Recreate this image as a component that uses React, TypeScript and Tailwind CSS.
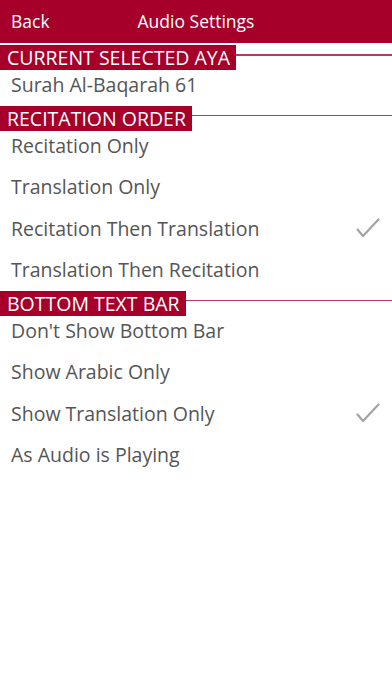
const SECTIONS = [
  { title: "CURRENT SELECTED AYA", items: [{ label: "Surah Al-Baqarah 61", checked: false }] },
  {
    title: "RECITATION ORDER",
    items: [
      { label: "Recitation Only", checked: false },
      { label: "Translation Only", checked: false },
      { label: "Recitation Then Translation", checked: true },
      { label: "Translation Then Recitation", checked: false },
    ],
  },
  {
    title: "BOTTOM TEXT BAR",
    items: [
      { label: "Don't Show Bottom Bar", checked: false },
      { label: "Show Arabic Only", checked: false },
      { label: "Show Translation Only", checked: true },
      { label: "As Audio is Playing", checked: false },
    ],
  },
];

function Check() {
  return (
    <svg width="24" height="20" viewBox="0 0 24 20" fill="none">
      <path d="M1.5 11.5 L7 18 L22.5 1.5" stroke="#a3a3a3" strokeWidth="2.2" strokeLinecap="round" strokeLinejoin="round" />
    </svg>
  );
}

export default function App() {
  return (
    <div className="w-[392px] h-[696px] bg-white overflow-hidden" style={{ fontFamily: "'Open Sans', 'Noto Sans', sans-serif" }}>
      <div className="h-[43px] bg-[#a6002a] flex items-center relative text-white text-[17.5px]">
        <span className="pl-[11px]">Back</span>
        <span className="absolute left-0 right-0 text-center pointer-events-none">Audio Settings</span>
      </div>
      <div className="pt-[2px]">
        {SECTIONS.map((s) => (
          <div key={s.title}>
            <div className="flex items-start h-[25px]">
              <div className="h-[25px] bg-[#a6002a] text-white text-[19.5px] leading-[25px] pl-[7px] pr-[6px] whitespace-nowrap">
                {s.title}
              </div>
              <div className="flex-1 h-[1.5px] bg-[#b73a57] mt-[9px]" />
            </div>
            <div className="-mt-[6px]">
              {s.items.map((it) => (
                <div key={it.label} className="h-[41.5px] flex items-center justify-between pl-[11px] pr-[12px] text-[19.5px] text-[#555555]">
                  <span>{it.label}</span>
                  {it.checked && <Check />}
                </div>
              ))}
            </div>
          </div>
        ))}
      </div>
    </div>
  );
}
